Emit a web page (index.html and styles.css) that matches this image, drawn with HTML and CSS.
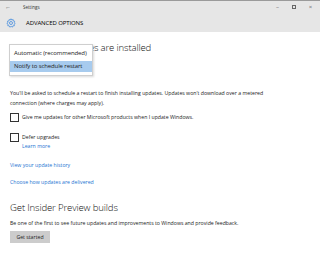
FILE: index.html
```html
<!DOCTYPE html>
<html lang="en">
<head>
    <meta charset="UTF-8">
    <title>Settings</title>
    <link rel="stylesheet" href="styles.css">
</head>
<body>
    <div class="window">
        <div class="titlebar">
            <span class="back">&#8592;</span>
            <span class="app-name">Settings</span>
            <div class="controls">
                <span class="ctl">&#8211;</span>
                <span class="ctl max"></span>
                <span class="ctl">&#215;</span>
            </div>
        </div>
        <div class="header">
            <svg class="gear" width="10" height="10" viewBox="0 0 20 20">
                <circle cx="10" cy="10" r="3" fill="none" stroke="#3a86dc" stroke-width="1.5"/>
                <path d="M10 1.5 L11.5 4 L14.3 3 L14.6 6 L17.5 6.4 L16.3 9.2 L18.5 11 L16 12.8 L16.8 15.6 L13.9 15.6 L12.8 18.3 L10.3 16.7 L7.7 18.3 L6.4 15.6 L3.5 15.5 L4.3 12.7 L1.6 10.9 L4 9.1 L2.9 6.3 L5.8 6 L6.2 3 L8.8 4 Z" fill="none" stroke="#3a86dc" stroke-width="1.4" stroke-linejoin="round"/>
            </svg>
            <span class="header-title">ADVANCED OPTIONS</span>
        </div>

        <div class="content">
            <div class="install-row">
                <h2 class="heading">Choose how updates are installed</h2>
                <div class="dropdown">
                    <div class="option">Automatic (recommended)</div>
                    <div class="option selected">Notify to schedule restart</div>
                </div>
            </div>

            <p class="text">You'll be asked to schedule a restart to finish installing updates. Updates won't download over a metered connection (where charges may apply).</p>

            <label class="check first">
                <span class="box"></span>
                <span>Give me updates for other Microsoft products when I update Windows.</span>
            </label>

            <label class="check">
                <span class="box"></span>
                <span class="check-text">
                    <span>Defer upgrades</span>
                    <a class="link" href="#">Learn more</a>
                </span>
            </label>

            <a class="link block history" href="#">View your update history</a>
            <a class="link block" href="#">Choose how updates are delivered</a>

            <h2 class="heading insider">Get Insider Preview builds</h2>
            <p class="text short">Be one of the first to see future updates and improvements to Windows and provide feedback.</p>
            <button class="btn">Get started</button>
        </div>
    </div>
</body>
</html>
```

FILE: styles.css
```css
body {
    margin: 0;
    font-family: 'Open Sans', 'Noto Sans', sans-serif;
    background-color: white;
    color: #000;
}
.window {
    width: 320px;
    height: 253px;
    overflow: hidden;
    border-top: 1px solid #9a9a9a;
    box-sizing: border-box;
}
.titlebar {
    height: 12px;
    background-color: #e6e6e6;
    display: flex;
    align-items: center;
    font-size: 4.5px;
    color: #333;
}
.back {
    width: 9px;
    margin-left: 5px;
    font-size: 6px;
    color: #555;
}
.app-name {
    margin-left: 9px;
}
.controls {
    margin-left: auto;
    display: flex;
    align-items: center;
    gap: 11px;
    margin-right: 6px;
}
.ctl {
    width: 7px;
    text-align: center;
    font-size: 6px;
    color: #666;
}
.ctl.max {
    width: 4px;
    height: 4px;
    border: 1px solid #666;
    box-sizing: border-box;
}
.header {
    height: 19px;
    background-color: #e6e6e6;
    display: flex;
    align-items: center;
    padding-left: 6px;
}
.gear {
    margin-right: 10px;
}
.header-title {
    font-size: 6px;
    letter-spacing: -0.1px;
}
.content {
    padding: 0 10px;
}
.install-row {
    position: relative;
    height: 56px;
}
.heading {
    font-weight: 300;
    font-size: 9.6px;
    line-height: 12px;
    margin: 0;
    padding-top: 10px;
    color: #111;
    letter-spacing: -0.15px;
}
.dropdown {
    position: absolute;
    left: -1px;
    top: 12px;
    width: 82px;
    background-color: white;
    border: 1px solid #cfcfcf;
    box-shadow: 1px 1px 2px rgba(0,0,0,0.15);
    padding: 3px 0 3px 0;
    font-size: 6px;
    letter-spacing: -0.1px;
}
.option {
    height: 11px;
    line-height: 11px;
    padding-left: 4px;
    color: #222;
}
.option + .option {
    margin-top: 2px;
}
.option.selected {
    background-color: #a7cbee;
}
.text {
    font-size: 5.2px;
    line-height: 10px;
    margin: 0;
    max-width: 272px;
    color: #222;
}
.check {
    display: flex;
    align-items: flex-start;
    font-size: 5.2px;
    color: #222;
    line-height: 9px;
    margin-top: 11px;
}
.check.first {
    margin-top: 5px;
}
.box {
    width: 9px;
    height: 9px;
    border: 1px solid #333;
    box-sizing: border-box;
    margin-right: 3px;
    flex-shrink: 0;
}
.check-text {
    display: flex;
    flex-direction: column;
    line-height: 9px;
}
.link {
    color: #1e73d2;
    text-decoration: none;
    font-size: 5.2px;
}
.link.block {
    display: block;
    line-height: 10px;
    margin-top: 7px;
}
.link.block.history {
    margin-top: 9px;
}
.heading.insider {
    padding-top: 15px;
}
.text.short {
    margin-top: 4px;
    max-width: none;
}
.btn {
    display: block;
    font-family: inherit;
    font-size: 5.2px;
    background-color: #cccccc;
    border: none;
    padding: 0;
    margin-top: 3px;
    height: 12px;
    width: 40px;
    white-space: nowrap;
    color: #222;
}
```
